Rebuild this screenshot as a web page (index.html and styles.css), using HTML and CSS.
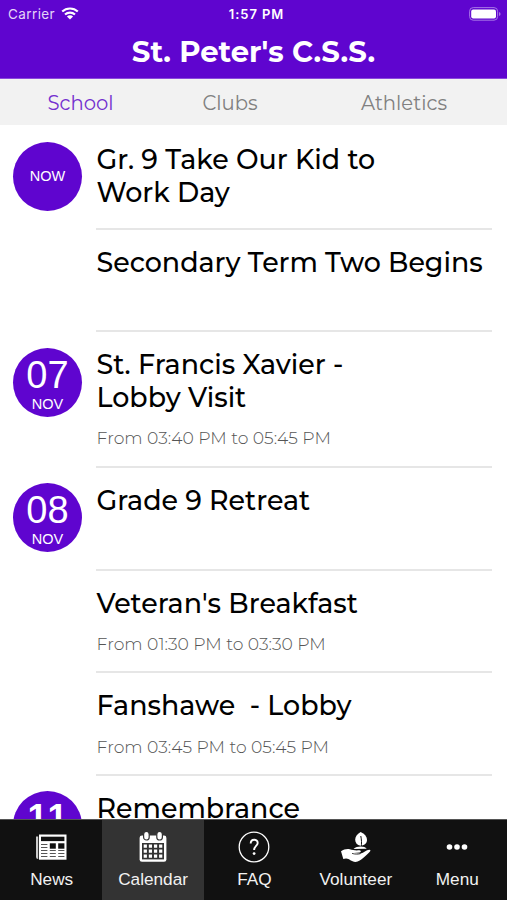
FILE: index.html
```
<!DOCTYPE html>
<html lang="en">
<head>
    <meta charset="UTF-8">
    <meta name="viewport" content="width=device-width, initial-scale=1.0">
    <title>St. Peter's C.S.S.</title>
    <link rel="stylesheet" href="styles.css">
</head>
<body>
    <div class="header">
        <div class="status-bar">
            <div class="carrier">
                <span>Carrier</span>
                <svg class="wifi" width="18" height="13" viewBox="0 0 18 13">
                    <path d="M1.2 4.6a11.2 11.2 0 0 1 15.6 0M4 7.6a7.2 7.2 0 0 1 10 0" fill="none" stroke="#fff" stroke-width="2.1"/>
                    <path d="M9 12.6L5.9 9.5a4.4 4.4 0 0 1 6.2 0z" fill="#fff"/>
                </svg>
            </div>
            <div class="time">1:57 PM</div>
            <div class="battery">
                <svg width="32" height="14" viewBox="0 0 32 14">
                    <rect x="0.6" y="0.6" width="28" height="12.6" rx="3.6" fill="none" stroke="#a675e6" stroke-width="1"/>
                    <rect x="2.2" y="2.4" width="24.8" height="9" rx="2" fill="#fff"/>
                    <path d="M30 5v4q1.6-.6 1.6-2T30 5z" fill="#a675e6"/>
                </svg>
            </div>
        </div>
        <h1>St. Peter's C.S.S.</h1>
    </div>

    <div class="tabs">
        <div class="tab school active">School</div>
        <div class="tab clubs">Clubs</div>
        <div class="tab athletics">Athletics</div>
    </div>

    <div class="events">
        <div class="event">
            <div class="date"><div class="circle now"><span class="month">NOW</span></div></div>
            <div class="info">
                <div class="title">Gr. 9 Take Our Kid to<br>Work Day</div>
            </div>
        </div>
        <div class="event">
            <div class="date"></div>
            <div class="info">
                <div class="title">Secondary Term Two Begins</div>
            </div>
        </div>
        <div class="event">
            <div class="date"><div class="circle"><span class="day">07</span><span class="month">NOV</span></div></div>
            <div class="info tall">
                <div class="title">St. Francis Xavier -<br>Lobby Visit</div>
                <div class="hours">From 03:40 PM to 05:45 PM</div>
            </div>
        </div>
        <div class="event">
            <div class="date"><div class="circle"><span class="day">08</span><span class="month">NOV</span></div></div>
            <div class="info">
                <div class="title">Grade 9 Retreat</div>
            </div>
        </div>
        <div class="event">
            <div class="date"></div>
            <div class="info">
                <div class="title">Veteran's Breakfast</div>
                <div class="hours">From 01:30 PM to 03:30 PM</div>
            </div>
        </div>
        <div class="event">
            <div class="date"></div>
            <div class="info">
                <div class="title">Fanshawe&nbsp; - Lobby</div>
                <div class="hours">From 03:45 PM to 05:45 PM</div>
            </div>
        </div>
        <div class="event">
            <div class="date"><div class="circle"><span class="day bold">11</span></div></div>
            <div class="info">
                <div class="title">Remembrance</div>
            </div>
        </div>
    </div>

    <div class="bottom-nav">
        <div class="nav-item">
            <svg width="34" height="34" viewBox="0 0 34 34">
                <path d="M1 6.500h2.200V29H3q-2 0-2-2z" fill="#ccc"/>
                <rect x="4" y="4.5" width="27.5" height="25.2" fill="#fff"/>
                <rect x="6" y="6.7" width="23.4" height="4.4" fill="#111"/>
                <g fill="#111">
                    <rect x="14.8" y="13.3" width="6" height="5.4"/>
                    <rect x="23.2" y="13.3" width="6.2" height="5.4"/>
                </g>
                <path d="M6 14.5h6.4M6 17.5h6.4M6 20.5h6.4M6 23.5h6.4M6 26.5h6.4M14.8 20.5h6M14.8 23.5h6M14.8 26.5h6M23.2 20.5h6.2M23.2 23.5h6.2M23.2 26.5h6.2" stroke="#555" stroke-width="1.2"/>
            </svg>
            <span>News</span>
        </div>
        <div class="nav-item active">
            <svg width="34" height="34" viewBox="0 0 34 34">
                <rect x="3.6" y="5.6" width="26.8" height="26.2" rx="2.4" fill="#fff"/>
                <rect x="6" y="13" width="22" height="16.4" fill="#333"/>
                <g fill="#fff" stroke="#333" stroke-width="1.2">
                    <rect x="7.6" y="1.4" width="5.6" height="8.6" rx="2.8"/>
                    <rect x="20.8" y="1.4" width="5.6" height="8.6" rx="2.8"/>
                </g>
                <path d="M7.7 16.2h19M7.7 21.2h19M7.7 26.2h19" stroke="#fff" stroke-width="3.2" stroke-dasharray="3.2 1.93"/>
            </svg>
            <span>Calendar</span>
        </div>
        <div class="nav-item">
            <svg width="34" height="34" viewBox="0 0 34 34">
                <circle cx="17" cy="17" r="14.8" fill="none" stroke="#fff" stroke-width="1.3"/>
                <path d="M13.7 13.5c0-5 7-4.8 7-.6 0 3-3.6 3.2-3.6 7.2" fill="none" stroke="#fff" stroke-width="1.9"/>
                <circle cx="17.1" cy="23.6" r="1.4" fill="#fff"/>
            </svg>
            <span>FAQ</span>
        </div>
        <div class="nav-item">
            <svg width="34" height="34" viewBox="0 0 34 34">
                <path d="M21.600 2c-3.600 2.200-5.400 4.400-5.400 7.700 0 3 1.800 5.400 5.400 6.100C26 15.400 28 13 28 9.800 28 6.400 25.600 4 21.600 2z" fill="#fff"/>
                <path d="M21.800 6c.8 4 .9 7 .4 12" fill="none" stroke="#111" stroke-width="1"/>
                <path d="M14.500 19c2-1.700 4.500-2.400 7.200-2.400 2.900 0 4.800.8 6 2.200z" fill="#fff"/>
                <path d="M2 21.3c2.8-1.700 5.500-2.600 8.700-2 3.200.7 4.800 1.300 9.500 1 2 0 2.200 1.900.5 2.200l-6 .6 7 .4c3-.6 5.300-3.400 8.700-3.700 1.300 0 1.300 1.200.4 2-3.800 3.600-8.300 9.200-14.300 10.200-4.500 0-6-3.500-9.500-3.400L4.300 29z" fill="#fff"/>
                <path d="M13 23.400c3 .9 6 1 8.600.2" fill="none" stroke="#111" stroke-width=".8"/>
            </svg>
            <span>Volunteer</span>
        </div>
        <div class="nav-item">
            <svg width="34" height="34" viewBox="0 0 34 34">
                <g fill="#fff">
                    <circle cx="9.500" cy="17" r="2.800"/>
                    <circle cx="17" cy="17" r="2.800"/>
                    <circle cx="24.500" cy="17" r="2.800"/>
                </g>
            </svg>
            <span>Menu</span>
        </div>
    </div>
</body>
</html>
```
FILE: styles.css
```
* {
    box-sizing: border-box;
}

body {
    margin: 0;
    height: 900px;
    display: flex;
    flex-direction: column;
    overflow: hidden;
    background-color: #fff;
    color: #000;
    font-family: Montserrat, Inter, sans-serif;
}

.header {
    flex: none;
    height: 79px;
    background-color: #5f05cf;
    border-bottom: 1px solid #8a49dc;
    color: #fff;
}

.status-bar {
    display: grid;
    grid-template-columns: 1fr auto 1fr;
    align-items: center;
    height: 27px;
    padding: 0 6px 0 8px;
    font-family: Inter, sans-serif;
    font-size: 13px;
}

.carrier {
    display: flex;
    align-items: center;
    gap: 6px;
    font-size: 13.5px;
    letter-spacing: 0.4px;
    color: #e4d4f7;
}

.wifi {
    display: block;
}

.time {
    font-weight: 600;
    letter-spacing: 0.9px;
    padding-left: 4px;
}

.battery {
    display: flex;
    justify-content: flex-end;
}

h1 {
    margin: 0;
    font-size: 29.1px;
    line-height: 50px;
    font-weight: 700;
    text-align: center;
}

.tabs {
    flex: none;
    display: flex;
    height: 46px;
    overflow: hidden;
    background-color: #f2f2f2;
    color: #808080;
    font-size: 19.6px;
    line-height: 48px;
    text-align: center;
}

.tab {
    flex: none;
}

.tab.active {
    color: #7430cf;
}

.school {
    width: 161px;
}

.clubs {
    width: 138px;
}

.athletics {
    width: 210px;
}

.events {
    flex: 1;
    min-height: 0;
    overflow: hidden;
    padding-top: 2px;
}

.event {
    display: flex;
    padding-right: 15px;
}

.date {
    flex: none;
    width: 96px;
    padding: 15.4px 0 0 13px;
}

.circle {
    width: 69px;
    height: 69px;
    padding-top: 6px;
    border-radius: 50%;
    background-color: #5f05cf;
    color: #fff;
    display: flex;
    flex-direction: column;
    align-items: center;
    font-family: "Liberation Sans", Arial, sans-serif;
}

.circle.now {
    justify-content: center;
    padding-top: 0;
}

.day {
    font-size: 38px;
    line-height: 42px;
}

.day.bold {
    font-weight: bold;
    font-size: 36px;
    font-kerning: none;
}

.month {
    font-size: 14.5px;
    line-height: 17px;
}

.info {
    flex: 1;
    height: 102.6px;
    padding: 17px 0 0 0.5px;
    border-bottom: 2px solid #e6e6e6;
}

.info.tall {
    height: 135.8px;
}

.title {
    font-size: 26.9px;
    line-height: 32.5px;
    font-weight: 500;
    white-space: nowrap;
}

.hours {
    margin-top: 11px;
    font-size: 17.2px;
    line-height: 25px;
    font-weight: 300;
    color: #555;
}

.bottom-nav {
    flex: none;
    display: flex;
    height: 81px;
    padding-left: 1px;
    background-color: #111;
    border-top: 1px solid #555;
    color: #f2f2f2;
    font-family: "Liberation Sans", Arial, sans-serif;
    font-size: 17.2px;
}

.nav-item {
    flex: 0 0 101.4px;
    display: flex;
    flex-direction: column;
    align-items: center;
    padding-top: 10px;
    line-height: 20px;
}

.nav-item span {
    margin-top: 5px;
}

.nav-item.active {
    background-color: #333;
}
```
